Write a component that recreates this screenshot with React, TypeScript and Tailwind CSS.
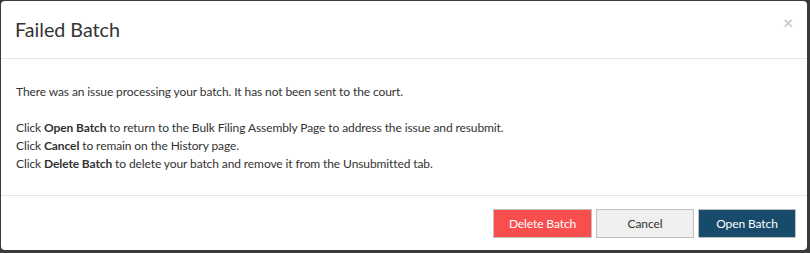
import React from "react";

export default function App() {
  return (
    <div className="w-[810px] h-[253px] bg-[#3b3b3b] pt-px pl-px pr-[3px] pb-[3px]" style={{ fontFamily: "Lato, 'Open Sans', sans-serif" }}>
      <div className="w-full h-full bg-white rounded-[4px] flex flex-col text-[#333]">
        <div className="h-[58px] border-b border-[#e5e5e5] flex items-center justify-between pl-[14px] pr-[14px]">
          <h4 className="text-[19.7px] leading-none text-[#333]">Failed Batch</h4>
          <span className="self-start mt-[13px] text-[#c8c8c8] text-[17px] leading-none font-bold">×</span>
        </div>
        <div className="px-[15px] pt-[24px] text-[12px] tracking-[-0.1px] leading-[18px] h-[136px]">
          <p>There was an issue processing your batch. It has not been sent to the court.</p>
          <p className="mt-[18px]">Click <b className="font-bold">Open Batch</b> to return to the Bulk Filing Assembly Page to address the issue and resubmit.</p>
          <p>Click <b className="font-bold">Cancel</b> to remain on the History page.</p>
          <p>Click <b className="font-bold">Delete Batch</b> to delete your batch and remove it from the Unsubmitted tab.</p>
        </div>
        <div className="border-t border-[#e5e5e5] flex justify-end gap-[4px] pr-[11px] pt-[13px]">
          <button className="w-[99px] h-[29px] bg-[#f84e4e] border border-[#c0c0c0] text-white text-[12px] tracking-[-0.1px]">Delete Batch</button>
          <button className="w-[98px] h-[29px] bg-[#efefef] border border-[#c0c0c0] text-[#333] text-[12px] tracking-[-0.1px]">Cancel</button>
          <button className="w-[98px] h-[29px] bg-[#174a6b] border border-[#c0c0c0] text-white text-[12px] tracking-[-0.1px]">Open Batch</button>
        </div>
      </div>
    </div>
  );
}
